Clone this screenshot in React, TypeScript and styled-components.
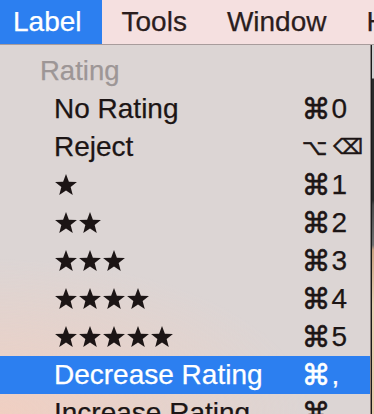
import React from 'react';
import styled, {createGlobalStyle} from 'styled-components';

const GlobalStyle = createGlobalStyle`
  html, body {
    margin: 0;
    padding: 0;
    overflow: hidden;
    background: #2b2b2b;
  }
`

type Key = { text: string; symbol?: boolean; size?: number }

type Item = {
  label?: string;
  stars?: number;
  keys: Key[];
  active?: boolean;
}

const cmd: Key = {text: '⌘', symbol: true}

const items: Item[] = [
  {label: 'No Rating', keys: [cmd, {text: '0'}]},
  {label: 'Reject', keys: [{text: '⌥', symbol: true, size: 22}, {text: '⌫', symbol: true, size: 21}]},
  {stars: 1, keys: [cmd, {text: '1'}]},
  {stars: 2, keys: [cmd, {text: '2'}]},
  {stars: 3, keys: [cmd, {text: '3'}]},
  {stars: 4, keys: [cmd, {text: '4'}]},
  {stars: 5, keys: [cmd, {text: '5'}]},
  {label: 'Decrease Rating', keys: [cmd, {text: ','}], active: true},
  {label: 'Increase Rating', keys: [cmd, {text: '.'}]},
]

const Star = () => (
  <svg width="24" height="24" viewBox="0 0 24 24">
    <polygon
      fill="currentColor"
      points="12,1.1 14.88,8.64 22.94,9.05 16.66,14.11 18.76,21.9 12,17.5 5.24,21.9 7.34,14.11 1.06,9.05 9.12,8.64"
    />
  </svg>
)

export default function App() {
  return (
    <Screen>
      <GlobalStyle/>
      <MenuBar>
        <MenuTitle active first>Label</MenuTitle>
        <MenuTitle>Tools</MenuTitle>
        <MenuTitle>Window</MenuTitle>
        <MenuTitle>Help</MenuTitle>
      </MenuBar>
      <Body>
        <Dropdown>
          <SectionHeader>Rating</SectionHeader>
          {items.map((item, i) => (
            <Row key={i} active={item.active}>
              {item.stars ? (
                <Stars>
                  {Array.from({length: item.stars}).map((_, j) => <Star key={j}/>)}
                </Stars>
              ) : (
                <ItemLabel>{item.label}</ItemLabel>
              )}
              <Shortcut>
                {item.keys.map((k, j) => (
                  <KeyGlyph key={j} symbol={k.symbol} size={k.size}>{k.text}</KeyGlyph>
                ))}
              </Shortcut>
            </Row>
          ))}
        </Dropdown>
        <Backdrop/>
      </Body>
    </Screen>
  );
}

const Screen = styled.div`
  width: 374px;
  height: 414px;
  overflow: hidden;
  display: flex;
  flex-direction: column;
  font-family: "Liberation Sans", "DejaVu Sans", sans-serif;
  -webkit-text-stroke: 0.25px currentColor;
`

const MenuBar = styled.div`
  height: 44px;
  flex-shrink: 0;
  display: flex;
  align-items: stretch;
  background: #f5e0e0;
  border-bottom: 1px solid #a89c9c;
  white-space: nowrap;
`

const MenuTitle = styled.div<{ active?: boolean; first?: boolean }>`
  display: flex;
  align-items: center;
  padding: 0 20px 0 ${p => p.first ? '13px' : '20px'};
  font-size: 28px;
  color: ${p => p.active ? '#fff' : '#2b1d1d'};
  background: ${p => p.active ? '#2c7ff0' : 'transparent'};
`

const Body = styled.div`
  flex: 1;
  display: flex;
  min-height: 0;
`

const Dropdown = styled.div`
  width: 370px;
  flex-shrink: 0;
  padding-top: 7px;
  border-right: 1px solid rgba(40, 30, 30, 0.45);
  background: radial-gradient(ellipse 120% 60% at 0% 100%, #f0cfc2 0%, rgba(240, 207, 194, 0) 70%),
  #dcd5d4;
`

const SectionHeader = styled.div`
  height: 38px;
  display: flex;
  align-items: center;
  padding-left: 40px;
  font-size: 27.5px;
  color: #9d9696;
`

const Row = styled.div<{ active?: boolean }>`
  height: 38px;
  display: grid;
  grid-template-columns: 248px 1fr;
  align-items: center;
  padding-left: 54px;
  font-size: 28px;
  white-space: nowrap;
  color: ${p => p.active ? '#fff' : '#1c1515'};
  background: ${p => p.active ? '#2c7ff0' : 'transparent'};
`

const ItemLabel = styled.span``

const Stars = styled.span`
  display: flex;
  align-items: center;
  margin-top: -1px;
`

const Shortcut = styled.span`
  display: flex;
  align-items: center;
  gap: 1px;
`

const KeyGlyph = styled.span<{ symbol?: boolean; size?: number }>`
  font-family: ${p => p.symbol ? '"DejaVu Sans", sans-serif' : '"Liberation Sans", sans-serif'};
  font-size: ${p => p.size ? `${p.size}px` : p.symbol ? '28.5px' : '28px'};
  -webkit-text-stroke: ${p => p.symbol ? '0.6px currentColor' : '0.25px currentColor'};
  margin-right: ${p => p.size ? '5px' : '0'};
`

const Backdrop = styled.div`
  flex: 1;
  border-left: 1px solid #1a1a1a;
  background: linear-gradient(180deg,
  #d2d0d0 0px, #d2d0d0 33px,
  #2b2b2b 34px, #2b2b2b 155px,
  #4a4a4a 160px, #707070 200px,
  #c9a27f 205px, #e9cfb2 260px, #e8c9a8 369px);
`
